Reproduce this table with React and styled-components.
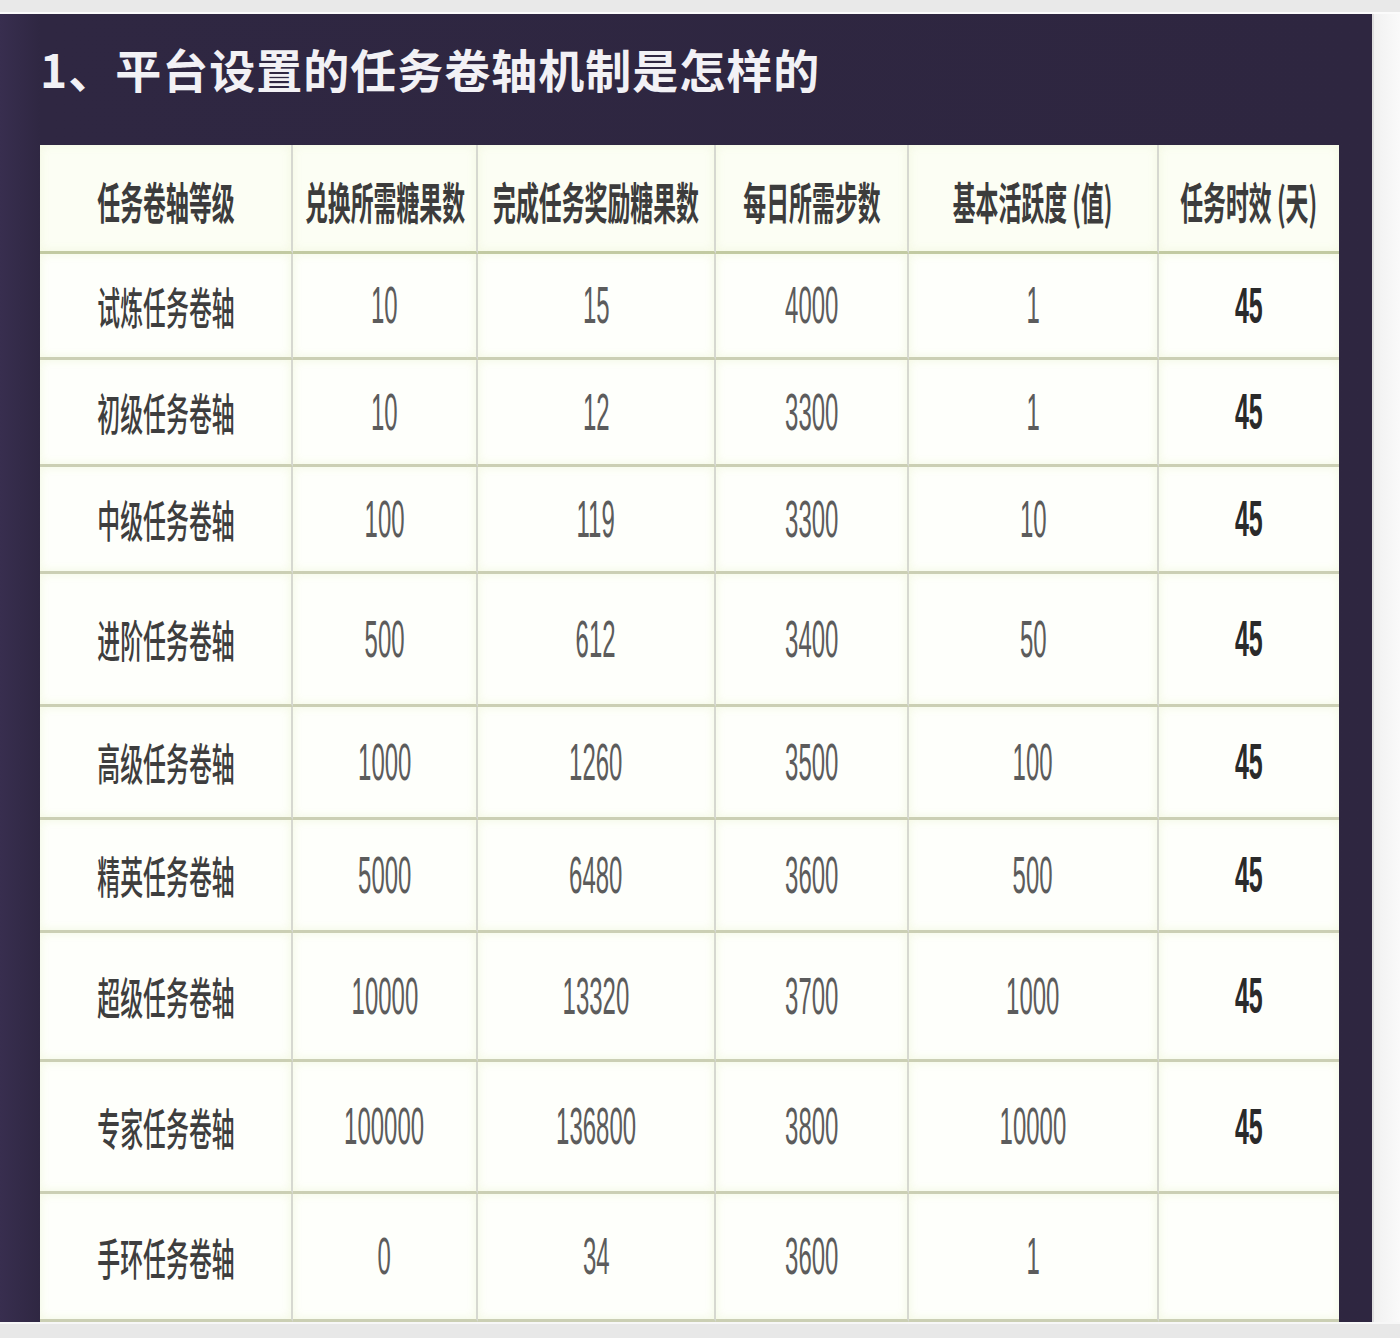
import React from "react";
import styled, { createGlobalStyle, css } from "styled-components";

const GlobalStyle = createGlobalStyle`
  html, body {
    margin: 0;
    padding: 0;
    background: #ececec;
  }
  body {
    font-family: "Noto Sans CJK SC", "Noto Sans", sans-serif;
  }
`;

const columns = [253, 185, 238, 193, 250, 180];
const rowHeights = [109, 106, 107, 107, 133, 113, 113, 129, 132, 128];

const headers = [
  "任务卷轴等级",
  "兑换所需糖果数",
  "完成任务奖励糖果数",
  "每日所需步数",
  "基本活跃度 (值)",
  "任务时效 (天)",
];

const rows = [
  ["试炼任务卷轴", "10", "15", "4000", "1", "45"],
  ["初级任务卷轴", "10", "12", "3300", "1", "45"],
  ["中级任务卷轴", "100", "119", "3300", "10", "45"],
  ["进阶任务卷轴", "500", "612", "3400", "50", "45"],
  ["高级任务卷轴", "1000", "1260", "3500", "100", "45"],
  ["精英任务卷轴", "5000", "6480", "3600", "500", "45"],
  ["超级任务卷轴", "10000", "13320", "3700", "1000", "45"],
  ["专家任务卷轴", "100000", "136800", "3800", "10000", "45"],
  ["手环任务卷轴", "0", "34", "3600", "1", ""],
];

export default function App() {
  return (
    <Page>
      <GlobalStyle />
      <TopBand />
      <Body>
        <Panel>
          <Title>1、平台设置的任务卷轴机制是怎样的</Title>
          <Grid>
            {headers.map((h, i) => (
              <Cell key={h} $kind="head" $last={i === headers.length - 1}>
                <Text $kind="head">{h}</Text>
              </Cell>
            ))}
            {rows.map((row) =>
              row.map((value, i) => {
                const kind = i === 0 ? "label" : i === 5 ? "days" : "num";
                return (
                  <Cell key={row[0] + i} $kind={kind} $last={i === 5}>
                    <Text $kind={kind}>{value}</Text>
                  </Cell>
                );
              })
            )}
          </Grid>
        </Panel>
        <Side />
      </Body>
      <BottomBand />
    </Page>
  );
}

const Page = styled.div`
  width: 1400px;
  height: 1338px;
  display: flex;
  flex-direction: column;
  background: #ececec;
  overflow: hidden;
`;

const TopBand = styled.div`
  height: 12px;
  background: #e9e9e9;
  border-bottom: 2px solid #fbfbfb;
`;

const Body = styled.div`
  display: flex;
  height: 1308px;
`;

const Panel = styled.section`
  width: 1372px;
  box-sizing: border-box;
  padding: 0 33px 0 40px;
  background: linear-gradient(90deg, #382e4f 0, #2f2742 40px, #2e2640 100%);
  display: flex;
  flex-direction: column;
`;

const Title = styled.h1`
  margin: 0;
  height: 131px;
  box-sizing: border-box;
  padding-top: 27px;
  font-size: 46px;
  line-height: 54px;
  font-weight: 700;
  color: #f2f1f5;
  letter-spacing: 1px;
  white-space: nowrap;
`;

const Grid = styled.div`
  display: grid;
  grid-template-columns: ${columns.map((c) => c + "px").join(" ")};
  grid-template-rows: ${rowHeights.map((r) => r + "px").join(" ")};
  background: #fdfefa;
`;

const Cell = styled.div`
  box-sizing: border-box;
  display: flex;
  align-items: center;
  justify-content: center;
  overflow: visible;
  background: #fefffb;
  box-shadow: inset 0 0 10px rgba(242, 247, 222, 0.9);
  border-right: ${(p) => (p.$last ? "none" : "2px solid #d6d8d0")};
  border-bottom: 3px solid #cbcfb4;

  ${(p) =>
    p.$kind === "head" &&
    css`
      background: #fcfef4;
      border-bottom-color: #c2caa2;
      padding-top: 6px;
    `}
`;

const Text = styled.span`
  display: inline-block;
  white-space: nowrap;
  transform-origin: center;

  ${(p) =>
    p.$kind === "head" &&
    css`
      font-family: "Noto Sans CJK SC", sans-serif;
      font-size: 44px;
      font-weight: 700;
      color: #3c3c3c;
      transform: scaleX(0.52);
    `}

  ${(p) =>
    p.$kind === "label" &&
    css`
      font-family: "Noto Sans CJK SC", sans-serif;
      font-size: 44px;
      font-weight: 500;
      color: #3e3e3e;
      transform: scaleX(0.52);
    `}

  ${(p) =>
    p.$kind === "num" &&
    css`
      font-family: "Liberation Sans", sans-serif;
      font-size: 51px;
      font-weight: 400;
      color: #5c5c5c;
      transform: scaleX(0.47);
    `}

  ${(p) =>
    p.$kind === "days" &&
    css`
      font-family: "Liberation Sans", sans-serif;
      font-size: 50px;
      font-weight: 700;
      color: #2a2a2a;
      transform: scaleX(0.5);
    `}
`;

const Side = styled.div`
  flex: 1;
  border-left: 2px solid #dedede;
  background: linear-gradient(90deg, #f1f1f1, #fafafa);
`;

const BottomBand = styled.div`
  flex: 1;
  background: #e8e8e8;
  border-top: 2px solid #f7f7f7;
`;
